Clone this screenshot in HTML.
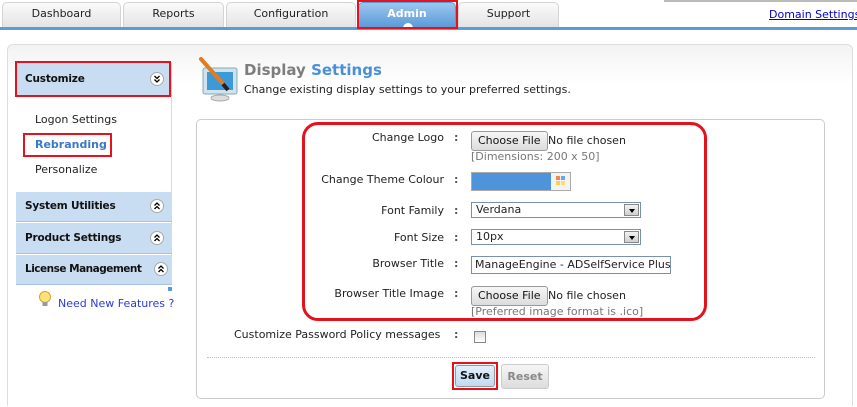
<!DOCTYPE html>
<html><head><meta charset="utf-8"><style>
*{margin:0;padding:0;box-sizing:border-box}
html,body{width:857px;height:407px;overflow:hidden}
body{background:#fff;font-family:"DejaVu Sans","Liberation Sans",sans-serif;font-size:11px;color:#222}
#w{position:relative;width:857px;height:407px;overflow:hidden}
.a{position:absolute;white-space:nowrap}
.tab{position:absolute;top:2px;height:25px;border:1px solid #d4d4d4;border-bottom:none;border-radius:5px 5px 0 0;background:linear-gradient(#fafafa,#e4e4e4);text-align:center;line-height:21px;font-size:11px;color:#222}
.hd{position:absolute;left:16px;width:156px;background:#c9ddf2;font-weight:bold;font-size:10.5px;letter-spacing:-0.2px;padding-left:9px;color:#111;border-bottom:1px solid #a9c3df;white-space:nowrap}
.chev{position:absolute;right:8px;width:14px;height:14px}
.lbl{position:absolute;right:413px;text-align:right;color:#222;white-space:nowrap}
.col{position:absolute;left:454px;font-weight:bold;color:#555}
.btn{position:absolute;height:20px;border:1px solid #999;border-radius:3px;background:linear-gradient(#f6f6f6,#dcdcdc);font-size:11px;line-height:18px;padding:0 6px;color:#111;white-space:nowrap}
.sel{position:absolute;left:471px;width:170px;height:16px;border:1px solid #7a8fa8;background:#fff;padding-left:4px;line-height:14px}
.sel i{position:absolute;right:1px;top:1px;width:15px;height:12px;background:linear-gradient(#f2f2f2,#cfcfcf);border:1px solid #888}
.sel i:after{content:"";position:absolute;left:4px;top:4px;border:3px solid transparent;border-top:4px solid #000}
.red{border:2px solid #e3121d;position:absolute}
</style></head><body><div id="w">
<div class="a" style="left:0;top:27px;width:857px;height:3px;background:#5b9bd9"></div>
<div class="a" style="left:664px;top:0;width:193px;height:2px;background:#bbb"></div>
<div class="tab" style="left:2px;width:119px">Dashboard</div>
<div class="tab" style="left:123px;width:101px">Reports</div>
<div class="tab" style="left:226px;width:130px">Configuration</div>
<div class="tab" style="left:358px;width:98px;background:linear-gradient(#9cc6ee,#5b9bd9);color:#fff;font-weight:bold;border-color:#5b9bd9">Admin<div style="position:absolute;left:44px;top:20px;width:10px;height:5px;border-radius:5px 5px 0 0;background:#fff"></div></div>
<div class="tab" style="left:458px;width:101px">Support</div>
<div class="red" style="left:357px;top:0;width:101px;height:29px"></div>
<div class="a" style="left:769px;top:8px;color:#00c;text-decoration:underline">Domain Settings</div>

<div class="a" style="left:7px;top:44px;width:846px;height:362px;border:1px solid #ddd;border-bottom:none;border-radius:6px 6px 0 0;background:linear-gradient(#f3f3f3,#fff 40px)"></div>

<div class="a" style="left:16px;top:62px;width:156px;height:223px;background:#fff;border-right:1px solid #c9ddf2"></div>
<div class="hd" style="top:62px;height:34px;line-height:34px">Customize<svg class="chev" style="top:10px" viewBox="0 0 14 14"><circle cx="7" cy="7" r="6.5" fill="#fff" stroke="#aaa"/><path d="M4.5 4l2.5 2.5L9.5 4M4.5 7.5L7 10l2.5-2.5" fill="none" stroke="#000" stroke-width="1.3"/></svg></div>
<div class="red" style="left:15px;top:61px;width:156px;height:36px"></div>
<div class="a" style="left:35px;top:113px">Logon Settings</div>
<div class="a" style="left:35px;top:138px;color:#3a78c8;font-weight:bold">Rebranding</div>
<div class="red" style="left:23px;top:133px;width:89px;height:24px"></div>
<div class="a" style="left:35px;top:163px">Personalize</div>
<div class="hd" style="top:192px;height:30px;line-height:29px">System Utilities<svg class="chev" style="top:7px" viewBox="0 0 14 14"><circle cx="7" cy="7" r="6.5" fill="#fff" stroke="#aaa"/><path d="M4.5 6.5L7 4l2.5 2.5M4.5 10L7 7.5l2.5 2.5" fill="none" stroke="#000" stroke-width="1.3"/></svg></div>
<div class="hd" style="top:223px;height:31px;line-height:30px">Product Settings<svg class="chev" style="top:8px" viewBox="0 0 14 14"><circle cx="7" cy="7" r="6.5" fill="#fff" stroke="#aaa"/><path d="M4.5 6.5L7 4l2.5 2.5M4.5 10L7 7.5l2.5 2.5" fill="none" stroke="#000" stroke-width="1.3"/></svg></div>
<div class="hd" style="top:255px;height:30px;line-height:29px;letter-spacing:-0.5px">License Management<svg class="chev" style="top:7px;right:4px" viewBox="0 0 14 14"><circle cx="7" cy="7" r="6.5" fill="#fff" stroke="#aaa"/><path d="M4.5 6.5L7 4l2.5 2.5M4.5 10L7 7.5l2.5 2.5" fill="none" stroke="#000" stroke-width="1.3"/></svg></div>
<div class="a" style="left:168px;top:287px;width:4px;height:4px;background:#5b9bd9"></div>
<svg class="a" style="left:38px;top:291px" width="14" height="16"><circle cx="7" cy="6" r="5.5" fill="#fbe27a" stroke="#d9a520"/><rect x="4.5" y="11" width="5" height="4" fill="#999"/></svg>
<div class="a" style="left:58px;top:297px;color:#2a3cd8">Need New Features ?</div>

<svg class="a" style="left:197px;top:56px" width="44" height="46"><rect x="6" y="12" width="34" height="26" rx="2" fill="#cfe2f2" stroke="#8aa"/><rect x="10" y="16" width="26" height="18" fill="#3d9ad8"/><ellipse cx="23" cy="42" rx="9" ry="3" fill="#ddd" stroke="#aaa"/><line x1="4" y1="3" x2="28" y2="30" stroke="#e37b20" stroke-width="4" stroke-linecap="round"/><line x1="26" y1="28" x2="31" y2="34" stroke="#222" stroke-width="4"/></svg>
<div class="a" style="left:244px;top:61px;font-size:15px;font-weight:bold;color:#7d7d7d">Display <span style="color:#4a90d9">Settings</span></div>
<div class="a" style="left:244px;top:83px">Change existing display settings to your preferred settings.</div>

<div class="a" style="left:196px;top:119px;width:629px;height:280px;border:1px solid #ccc;border-radius:5px;background:#fff"></div>
<div class="a" style="left:302px;top:122px;width:405px;height:199px;border:3px solid #e3121d;border-radius:16px"></div>

<div class="lbl" style="top:131px">Change Logo</div><div class="col" style="top:131px">:</div>
<div class="btn" style="left:471px;top:131px">Choose File</div><div class="a" style="left:548px;top:134px">No file chosen</div>
<div class="a" style="left:471px;top:150px;color:#777">[Dimensions: 200 x 50]</div>
<div class="lbl" style="top:173px">Change Theme Colour</div><div class="col" style="top:173px">:</div>
<div class="a" style="left:471px;top:172px;width:100px;height:19px;border:1px solid #aaa;background:#4f94db"></div>
<div class="a" style="left:551px;top:173px;width:19px;height:17px;background:#f3f3f3"></div>
<svg class="a" style="left:556px;top:176px" width="10" height="10"><rect width="4" height="4" fill="#e85"/><rect x="5" width="4" height="4" fill="#6ae"/><rect y="5" width="4" height="4" fill="#fc5"/><rect x="5" y="5" width="4" height="4" fill="#fd6"/></svg>
<div class="lbl" style="top:204px">Font Family</div><div class="col" style="top:204px">:</div>
<div class="sel" style="top:202px">Verdana<i></i></div>
<div class="lbl" style="top:231px">Font Size</div><div class="col" style="top:231px">:</div>
<div class="sel" style="top:229px">10px<i></i></div>
<div class="lbl" style="top:257px">Browser Title</div><div class="col" style="top:257px">:</div>
<div class="a" style="left:471px;top:256px;width:200px;height:18px;border:1px solid #7a8fa8;padding-left:3px;line-height:16px;overflow:hidden;white-space:nowrap">ManageEngine - ADSelfService Plus</div>
<div class="lbl" style="top:287px">Browser Title Image</div><div class="col" style="top:287px">:</div>
<div class="btn" style="left:471px;top:286px">Choose File</div><div class="a" style="left:548px;top:289px">No file chosen</div>
<div class="a" style="left:471px;top:305px;color:#777">[Preferred image format is .ico]</div>

<div class="a" style="left:234px;top:328px">Customize Password Policy messages</div><div class="col" style="top:328px">:</div>
<div class="a" style="left:474px;top:331px;width:12px;height:12px;border:1px solid #888;background:linear-gradient(#ddd,#fff)"></div>
<div class="a" style="left:207px;top:357px;width:608px;border-top:1px dotted #bbb"></div>
<div class="btn" style="left:455px;top:365px;width:40px;height:22px;font-weight:bold;background:linear-gradient(#e3effb,#c2daf2);text-align:center;padding:0;line-height:20px">Save</div>
<div class="red" style="left:452px;top:362px;width:46px;height:28px"></div>
<div class="btn" style="left:501px;top:364px;width:48px;height:25px;font-weight:bold;color:#888;text-align:center;padding:0;line-height:23px;border-color:#ccc">Reset</div>
</div></body></html>
